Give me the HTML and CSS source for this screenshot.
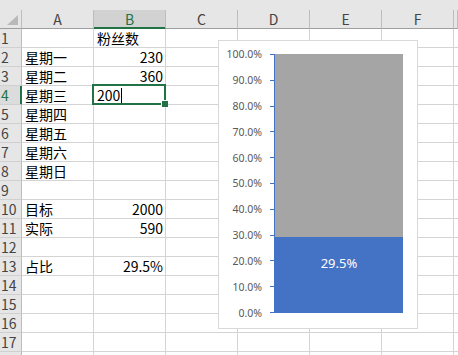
FILE: index.html
```html
<!DOCTYPE html>
<html lang="zh-CN">
<head>
    <meta charset="UTF-8">
    <title>粉丝数 - 占比</title>
    <link rel="stylesheet" href="styles.css">
</head>
<body>
    <div class="workbook">
        <div class="top-strip"></div>

        <div class="row head">
            <div class="corner"><span class="corner-mark"></span></div>
            <div class="ch">A</div>
            <div class="ch selected">B</div>
            <div class="ch">C</div>
            <div class="ch">D</div>
            <div class="ch">E</div>
            <div class="ch">F</div>
            <div class="ch"></div>
        </div>

        <div class="row">
            <div class="rh">1</div>
            <div class="c"></div><div class="c">粉丝数</div><div class="c"></div><div class="c"></div><div class="c"></div><div class="c"></div><div class="c"></div>
        </div>
        <div class="row">
            <div class="rh">2</div>
            <div class="c">星期一</div><div class="c n">230</div><div class="c"></div><div class="c"></div><div class="c"></div><div class="c"></div><div class="c"></div>
        </div>
        <div class="row">
            <div class="rh">3</div>
            <div class="c">星期二</div><div class="c n">360</div><div class="c"></div><div class="c"></div><div class="c"></div><div class="c"></div><div class="c"></div>
        </div>
        <div class="row">
            <div class="rh active-row">4</div>
            <div class="c">星期三</div><div class="c active">200<span class="caret"></span></div><div class="c"></div><div class="c"></div><div class="c"></div><div class="c"></div><div class="c"></div>
        </div>
        <div class="row">
            <div class="rh">5</div>
            <div class="c">星期四</div><div class="c"></div><div class="c"></div><div class="c"></div><div class="c"></div><div class="c"></div><div class="c"></div>
        </div>
        <div class="row">
            <div class="rh">6</div>
            <div class="c">星期五</div><div class="c"></div><div class="c"></div><div class="c"></div><div class="c"></div><div class="c"></div><div class="c"></div>
        </div>
        <div class="row">
            <div class="rh">7</div>
            <div class="c">星期六</div><div class="c"></div><div class="c"></div><div class="c"></div><div class="c"></div><div class="c"></div><div class="c"></div>
        </div>
        <div class="row">
            <div class="rh">8</div>
            <div class="c">星期日</div><div class="c"></div><div class="c"></div><div class="c"></div><div class="c"></div><div class="c"></div><div class="c"></div>
        </div>
        <div class="row">
            <div class="rh">9</div>
            <div class="c"></div><div class="c"></div><div class="c"></div><div class="c"></div><div class="c"></div><div class="c"></div><div class="c"></div>
        </div>
        <div class="row">
            <div class="rh">10</div>
            <div class="c">目标</div><div class="c n">2000</div><div class="c"></div><div class="c"></div><div class="c"></div><div class="c"></div><div class="c"></div>
        </div>
        <div class="row">
            <div class="rh">11</div>
            <div class="c">实际</div><div class="c n">590</div><div class="c"></div><div class="c"></div><div class="c"></div><div class="c"></div><div class="c"></div>
        </div>
        <div class="row">
            <div class="rh">12</div>
            <div class="c"></div><div class="c"></div><div class="c"></div><div class="c"></div><div class="c"></div><div class="c"></div><div class="c"></div>
        </div>
        <div class="row">
            <div class="rh">13</div>
            <div class="c">占比</div><div class="c n">29.5%</div><div class="c"></div><div class="c"></div><div class="c"></div><div class="c"></div><div class="c"></div>
        </div>
        <div class="row">
            <div class="rh">14</div>
            <div class="c"></div><div class="c"></div><div class="c"></div><div class="c"></div><div class="c"></div><div class="c"></div><div class="c"></div>
        </div>
        <div class="row">
            <div class="rh">15</div>
            <div class="c"></div><div class="c"></div><div class="c"></div><div class="c"></div><div class="c"></div><div class="c"></div><div class="c"></div>
        </div>
        <div class="row">
            <div class="rh">16</div>
            <div class="c"></div><div class="c"></div><div class="c"></div><div class="c"></div><div class="c"></div><div class="c"></div><div class="c"></div>
        </div>
        <div class="row">
            <div class="rh">17</div>
            <div class="c"></div><div class="c"></div><div class="c"></div><div class="c"></div><div class="c"></div><div class="c"></div><div class="c"></div>
        </div>
        <!-- row 18 only peeks in at the bottom edge -->
        <div class="row">
            <div class="rh"></div>
            <div class="c"></div><div class="c"></div><div class="c"></div><div class="c"></div><div class="c"></div><div class="c"></div><div class="c"></div>
        </div>

        <!-- chart floats over columns C:F -->
        <div class="chart">
            <div class="axis-labels">
                <span>100.0%</span>
                <span>90.0%</span>
                <span>80.0%</span>
                <span>70.0%</span>
                <span>60.0%</span>
                <span>50.0%</span>
                <span>40.0%</span>
                <span>30.0%</span>
                <span>20.0%</span>
                <span>10.0%</span>
                <span>0.0%</span>
            </div>
            <div class="ticks">
                <i></i><i></i><i></i><i></i><i></i><i></i><i></i><i></i><i></i><i></i><i></i>
            </div>
            <div class="plot">
                <div class="bar-rest"></div>
                <div class="bar-value" style="height: 29.5%">29.5%</div>
            </div>
        </div>
    </div>
</body>
</html>
```

FILE: styles.css
```css
* {
    margin: 0;
    padding: 0;
    box-sizing: border-box;
}

body {
    font-family: "Noto Sans CJK SC", "Noto Sans", sans-serif;
    background: #ffffff;
    color: #000000;
    overflow: hidden;
}

.workbook {
    position: relative;
    width: 458px;
    height: 355px;
    overflow: hidden;
}

.top-strip {
    height: 10px;
    background: #e6e6e6;
}

.row {
    display: grid;
    grid-template-columns: 22px repeat(6, 72px) 1fr;
    height: 19px;
}

.row > div {
    border-right: 1px solid #d4d4d4;
    border-bottom: 1px solid #d4d4d4;
}

/* column headers */
.head > div {
    background: #e6e6e6;
    border-right-color: #bdbdbd;
    border-bottom-color: #9e9e9e;
}

.ch {
    display: flex;
    align-items: center;
    justify-content: center;
    font-size: 14px;
    line-height: 17px;
    color: #444444;
    padding-top: 1px;
}

.ch.selected {
    background: #d2d2d2;
    color: #217346;
    border-bottom-color: #217346;
    box-shadow: inset 0 -1px 0 #217346;
}

.corner {
    position: relative;
}

.corner-mark {
    position: absolute;
    right: 3px;
    bottom: 3px;
    width: 0;
    height: 0;
    border-left: 11px solid transparent;
    border-bottom: 10px solid #b9b9b9;
}

/* row headers */
.row > .rh {
    background: #e6e6e6;
    border-right-color: #bdbdbd;
    border-bottom-color: #d0d0d0;
    display: flex;
    align-items: flex-end;
    font-size: 14px;
    line-height: 17px;
    color: #444444;
    padding-left: 1px;
}

.row > .rh.active-row {
    background: #dcdcdc;
    color: #217346;
    border-right-color: #217346;
    box-shadow: inset -1px 0 0 #217346;
}

/* cells */
.c {
    display: flex;
    align-items: flex-end;
    padding: 0 2px 0 3px;
    font-size: 14px;
    line-height: 17px;
    white-space: nowrap;
}

.c.n {
    justify-content: flex-end;
}

.c.active {
    position: relative;
}

.c.active::after {
    content: "";
    position: absolute;
    left: -2px;
    top: -2px;
    right: -1px;
    bottom: -1px;
    border: 2px solid #217346;
}

.c.active::before {
    content: "";
    position: absolute;
    right: -3px;
    bottom: -3px;
    width: 6px;
    height: 6px;
    background: #217346;
    border-left: 1px solid #ffffff;
    border-top: 1px solid #ffffff;
    z-index: 1;
}

.caret {
    display: inline-block;
    width: 1px;
    height: 15px;
    margin-left: 1px;
    margin-bottom: 1px;
    background: #000000;
}

/* chart */
.chart {
    position: absolute;
    left: 218px;
    top: 40px;
    width: 200px;
    height: 289px;
    background: #ffffff;
    border: 1px solid #d9d9d9;
    display: flex;
    align-items: flex-start;
    padding-top: 13px;
}

.axis-labels {
    width: 43px;
    height: 271px;
    margin-top: -6px;
    display: flex;
    flex-direction: column;
    justify-content: space-between;
    align-items: flex-end;
    font-family: "Noto Sans", sans-serif;
    font-size: 10.5px;
    line-height: 12px;
    color: #595959;
}

.ticks {
    width: 4px;
    height: 259px;
    margin-left: 8px;
    display: flex;
    flex-direction: column;
    justify-content: space-between;
}

.ticks i {
    display: block;
    height: 1px;
    background: #4472c4;
}

.plot {
    width: 129px;
    height: 259px;
    border-left: 1px solid #4472c4;
    display: flex;
    flex-direction: column;
}

.bar-rest {
    flex: 1;
    background: #a5a5a5;
}

.bar-value {
    background: #4472c4;
    text-align: center;
    padding-top: 17px;
    font-family: "Noto Sans", sans-serif;
    font-size: 13px;
    line-height: 18px;
    color: #ffffff;
}
```
